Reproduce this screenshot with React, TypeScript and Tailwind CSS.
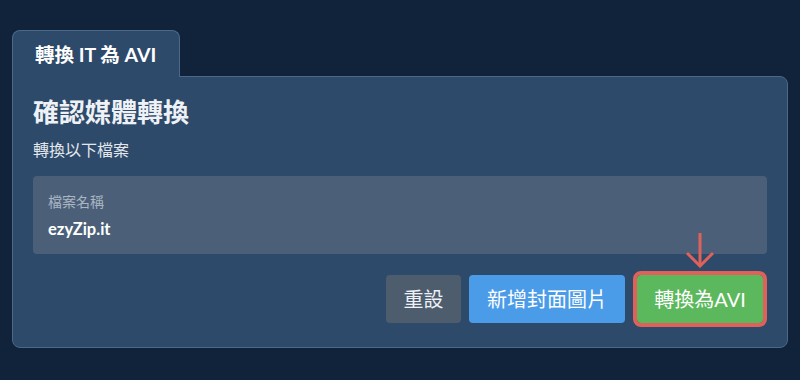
import React from "react";

export default function App() {
  const font = { fontFamily: 'Lato, "Noto Sans CJK TC", sans-serif' };
  return (
    <div className="min-h-[380px] w-[800px] bg-[#10233a] pt-[30px] px-3" style={font}>
      <div className="relative z-10 -mb-px inline-flex h-[47px] w-[168px] items-center pl-[22px] pt-[2px] bg-[#2d4a6a] border border-b-0 border-[#4b6889] rounded-t-lg text-white font-bold text-[19.5px]">
        轉換 IT 為 AVI
      </div>
      <div className="w-[776px] bg-[#2d4a6a] border border-[#4b6889] rounded-b-lg rounded-tr-lg px-5 pt-[19px] pb-6">
        <h1 className="text-[26px] leading-[32px] font-bold text-[#eef1f5]">確認媒體轉換</h1>
        <p className="mt-[10px] text-[16px] leading-[24px] text-[#e3e7ec]">轉換以下檔案</p>
        <div className="mt-[14px] h-[78px] rounded bg-[#4b6078] px-[15px] pt-[16px]">
          <div className="text-[14px] leading-[20px] text-[#a9b5c3]">檔案名稱</div>
          <div className="mt-[6px] text-[16.5px] leading-[22px] font-bold text-white">ezyZip.it</div>
        </div>
        <div className="mt-[21px] flex justify-end gap-2 pr-1">
          <button className="h-12 w-[75px] rounded bg-[#4d5d6e] text-[20px] text-[#eef1f5]">重設</button>
          <button className="h-12 w-[156px] rounded bg-[#4b9ce8] text-[20px] text-white">新增封面圖片</button>
          <div className="relative ml-1">
            <svg className="absolute left-1/2 -translate-x-1/2 -top-[43px]" width="30" height="36" viewBox="0 0 30 36" fill="none" stroke="#e0605a" strokeWidth="3">
              <path d="M15 1 V34" />
              <path d="M2 21 L15 34 L28 21" />
            </svg>
            <button className="h-12 w-[126px] rounded-sm bg-[#5cb85c] text-[20px] text-white outline-4 outline-solid outline-[#e0605a]">轉換為AVI</button>
          </div>
        </div>
      </div>
    </div>
  );
}
